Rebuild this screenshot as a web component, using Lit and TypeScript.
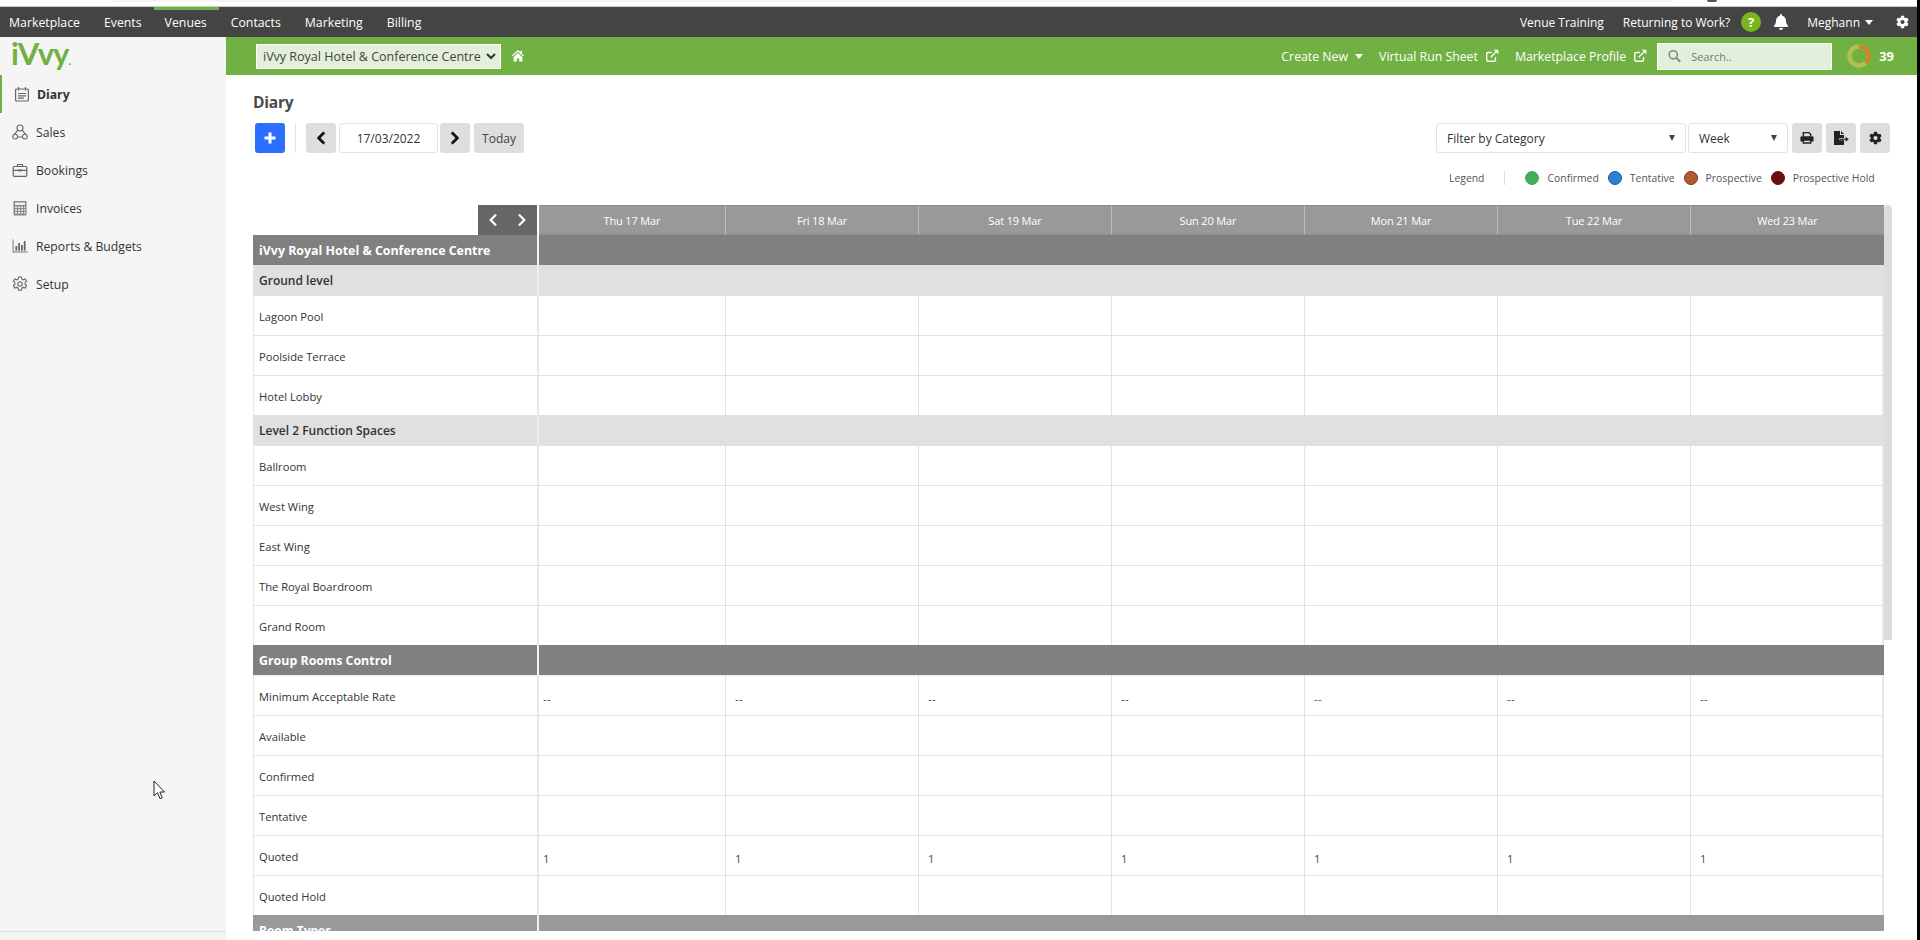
import { LitElement, html, css, svg } from "lit";
import { customElement } from "lit/decorators.js";

const ico = (vb: string, path: unknown, cls = "") => html`<svg class="ico ${cls}" viewBox=${vb} fill="currentColor">${path}</svg>`;

const chevL = svg`<path d="M34.52 239.03L228.87 44.69c9.37-9.37 24.57-9.37 33.94 0l22.67 22.67c9.36 9.36 9.37 24.52.04 33.9L131.49 256l154.02 154.75c9.34 9.38 9.32 24.54-.04 33.9l-22.67 22.67c-9.37 9.37-24.57 9.37-33.94 0L34.52 272.97c-9.37-9.37-9.37-24.57 0-33.94z"/>`;
const chevR = svg`<path d="M285.476 272.971L91.132 467.314c-9.373 9.373-24.569 9.373-33.941 0l-22.667-22.667c-9.357-9.357-9.375-24.522-.04-33.901L188.505 256 34.484 101.255c-9.335-9.379-9.317-24.544.04-33.901l22.667-22.667c9.373-9.373 24.569-9.373 33.941 0L285.475 239.03c9.373 9.372 9.373 24.568.001 33.941z"/>`;
const bell = svg`<path d="M224 512c35.32 0 63.97-28.65 63.97-64H160.03c0 35.35 28.65 64 63.97 64zm215.39-149.71c-19.32-20.76-55.47-51.99-55.47-154.29 0-77.7-54.48-139.9-127.94-155.16V32c0-17.67-14.32-32-31.98-32s-31.98 14.33-31.98 32v20.84C118.56 68.1 64.08 130.3 64.08 208c0 102.3-36.15 133.53-55.47 154.29-6 6.45-8.66 14.16-8.61 21.71.11 16.4 12.98 32 32.1 32h383.8c19.12 0 32-15.6 32.1-32 .05-7.55-2.61-15.27-8.61-21.71z"/>`;
const cog = svg`<path d="M487.4 315.7l-42.6-24.6c4.3-23.2 4.3-47 0-70.2l42.6-24.6c4.9-2.8 7.1-8.6 5.5-14-11.1-35.6-30-67.8-54.7-94.6-3.8-4.1-10-5.1-14.8-2.3L380.8 110c-17.9-15.4-38.5-27.3-60.8-35.1V25.8c0-5.6-3.9-10.5-9.4-11.7-36.7-8.2-74.3-7.8-109.2 0-5.5 1.2-9.4 6.1-9.4 11.7V75c-22.2 7.9-42.8 19.8-60.8 35.1L88.7 85.5c-4.9-2.8-11-1.9-14.8 2.3-24.7 26.7-43.6 58.9-54.7 94.6-1.7 5.4.6 11.2 5.5 14L67.3 221c-4.3 23.2-4.3 47 0 70.2l-42.6 24.6c-4.9 2.8-7.1 8.6-5.5 14 11.1 35.6 30 67.8 54.7 94.6 3.8 4.1 10 5.1 14.8 2.3l42.6-24.6c17.9 15.4 38.5 27.3 60.8 35.1v49.2c0 5.6 3.9 10.5 9.4 11.7 36.7 8.2 74.3 7.8 109.2 0 5.5-1.2 9.4-6.1 9.4-11.7v-49.2c22.2-7.9 42.8-19.8 60.8-35.1l42.6 24.6c4.9 2.8 11 1.9 14.8-2.3 24.7-26.7 43.6-58.9 54.7-94.6 1.5-5.5-.7-11.3-5.6-14.1zM256 336c-44.1 0-80-35.9-80-80s35.9-80 80-80 80 35.9 80 80-35.9 80-80 80z"/>`;
const home = svg`<path d="M8 1.2L1 7.4l.9 1L8 3.1l6.100 5.300.9-1-2.400-2.100V2h-1.700v1.800z"/><path d="M3 9v5.400h3.600v-3.600h2.800v3.600H13V9L8 4.600z"/>`;
const ext = svg`<g fill="none" stroke="currentColor" stroke-width="1.500"><path d="M12 9v3.500a1.500 1.500 0 0 1-1.500 1.500h-7A1.500 1.500 0 0 1 2 12.500v-7A1.500 1.500 0 0 1 3.500 4H8"/><path d="M6.500 9.500L14 2"/></g><path d="M10 .8h5.200V6z"/>`;
const printer = svg`<path d="M3 1h7.500L13 3.500V6h-1.600V4.200L9.800 2.600H4.600V6H3z"/><path fill-rule="evenodd" d="M2 6h12a1.500 1.500 0 0 1 1.500 1.500V12H13v2.500H3V12H.5V7.500A1.500 1.500 0 0 1 2 6zm2.600 5v1.900h6.800V11z"/>`;
const fileExp = svg`<path d="M1 1h6v4h4v3H6.500v2H11v4.500a.5.5 0 0 1-.5.500h-9a.5.5 0 0 1-.5-.5z"/><path d="M8 1l3 3H8z"/><path d="M6.500 8.500h6V6.500L16 9.300l-3.500 2.800v-2h-6z" stroke="#dedede" stroke-width=".4"/>`;
const search = svg`<g fill="none" stroke="currentColor" stroke-width="2"><circle cx="6.500" cy="6.500" r="5"/><path d="M10.200 10.200l4.800 4.800" stroke-width="2.400"/></g>`;

const sideIcons: Record<string, unknown> = {
  Diary: svg`<g fill="none" stroke="currentColor" stroke-width="1.200"><rect x="1.600" y="3" width="12.800" height="12" rx=".8"/><path d="M4.500 1v3.500M11.500 1v3.500M4 7.500h8M4 9.800h8M4 12.100h6"/></g>`,
  Sales: svg`<g fill="none" stroke="currentColor" stroke-width="1.100"><circle cx="8" cy="4" r="3"/><circle cx="3.200" cy="12.600" r="2.400"/><circle cx="12.800" cy="12.600" r="2.400"/><path d="M5.800 6.200L2.500 10.300M10.200 6.200l3.300 4.100M5.700 13h4.600"/></g>`,
  Bookings: svg`<g fill="none" stroke="currentColor" stroke-width="1.200"><rect x="1.200" y="4.500" width="13.600" height="9.800" rx="1"/><path d="M5.500 4.500V2.500h5v2M1.200 8.300h13.600"/></g><rect x="6.300" y="7.400" width="3.400" height="2" />`,
  Invoices: svg`<rect x="1.500" y="1" width="13" height="14.500" fill="#888" rx=".5"/><rect x="3" y="2.500" width="10" height="2.500" fill="#eee"/><g fill="#eee"><rect x="3" y="6.500" width="2" height="1.600"/><rect x="6" y="6.500" width="2" height="1.600"/><rect x="9" y="6.500" width="2" height="1.600"/><rect x="12" y="6.500" width="1.200" height="1.600"/><rect x="3" y="9.300" width="2" height="1.600"/><rect x="6" y="9.300" width="2" height="1.600"/><rect x="9" y="9.300" width="2" height="1.600"/><rect x="12" y="9.300" width="1.200" height="1.600"/><rect x="3" y="12" width="2" height="1.600"/><rect x="6" y="12" width="2" height="1.600"/><rect x="9" y="12" width="2" height="1.600"/><rect x="12" y="12" width="1.200" height="1.600"/></g>`,
  "Reports & Budgets": svg`<path d="M.6 1.500h1v12h14.800v1H.6z" fill="#777"/><rect x="3.400" y="8" width="1.800" height="4.700"/><rect x="6.200" y="5" width="1.800" height="7.700"/><rect x="9" y="7" width="1.800" height="5.700"/><rect x="11.800" y="3" width="1.800" height="9.700"/>`,
  Setup: svg`<g fill="none" stroke="currentColor" stroke-width="1.100"><path d="M6.600 1h2.800l.4 2 1.500.8 1.900-.8 1.400 2.400-1.500 1.300v1.700l1.500 1.300-1.400 2.400-1.900-.7-1.500.8-.4 2.100H6.600l-.4-2.100-1.500-.8-1.900.7-1.400-2.400 1.500-1.300V6.700L1.400 5.400l1.400-2.400 1.900.8 1.500-.8z"/><circle cx="8" cy="8" r="2.200"/></g>`,
};

const DAYS = ["Thu 17 Mar", "Fri 18 Mar", "Sat 19 Mar", "Sun 20 Mar", "Mon 21 Mar", "Tue 22 Mar", "Wed 23 Mar"];

type Row = { kind: "venue" | "group" | "room" | "types"; label: string; val?: string; last?: boolean; tall?: boolean };
const ROWS: Row[] = [
  { kind: "venue", label: "iVvy Royal Hotel & Conference Centre" },
  { kind: "group", label: "Ground level" },
  { kind: "room", label: "Lagoon Pool" },
  { kind: "room", label: "Poolside Terrace" },
  { kind: "room", label: "Hotel Lobby", last: true },
  { kind: "group", label: "Level 2 Function Spaces" },
  { kind: "room", label: "Ballroom" },
  { kind: "room", label: "West Wing" },
  { kind: "room", label: "East Wing" },
  { kind: "room", label: "The Royal Boardroom" },
  { kind: "room", label: "Grand Room", last: true },
  { kind: "venue", label: "Group Rooms Control", tall: true },
  { kind: "room", label: "Minimum Acceptable Rate", val: "--" },
  { kind: "room", label: "Available" },
  { kind: "room", label: "Confirmed" },
  { kind: "room", label: "Tentative" },
  { kind: "room", label: "Quoted", val: "1" },
  { kind: "room", label: "Quoted Hold", last: true },
  { kind: "types", label: "Room Types" },
];

@customElement("app-root")
export class AppRoot extends LitElement {
  static styles = css`
    :host { display: block; width: 1920px; height: 940px; overflow: hidden; background: #fff;
      font-family: "Open Sans", sans-serif; font-size: 12px; color: #333; position: relative; }
    * { box-sizing: border-box; }
    .ico { display: block; flex: none; }
    .page { display: flex; height: 940px; }
    .edge { width: 3px; background: #000; flex: none; }
    .shell { flex: 1; min-width: 0; display: flex; flex-direction: column; }

    .chrome { height: 7px; border-bottom: 1px solid #c8c8c8; display: flex; flex: none; }
    .chrome .band { margin-left: 113px; width: 1559px; height: 2px; background: #f4f4f4; }
    .chrome .blob { margin-left: 35px; width: 10px; height: 2px; background: #555; border-radius: 0 0 4px 4px; }

    .topnav { height: 30px; background: #444; display: flex; align-items: center; color: #fff; flex: none; font-size: 12.300px; }
    .topnav a { height: 30px; display: flex; align-items: center; padding: 0 12px; position: relative; }
    .topnav a.first { padding-left: 9px; }
    .topnav a.on { border-top: 3px solid #71b043; padding-bottom: 3px; padding-left: 11px; padding-right: 12px; }
    .topright { margin-left: auto; display: flex; align-items: center; height: 30px; font-size: 12px; }
    .topright .t1 { margin-right: 19px; }
    .topright .t2 { margin-right: 11px; }
    .help { width: 20px; height: 20px; border-radius: 50%; background: #7ab51d; font-weight: 700; font-size: 13px;
      display: flex; align-items: center; justify-content: center; margin-right: 13px; }
    .bell { width: 14px; height: 16px; margin-right: 19px; }
    .caret { width: 0; height: 0; border: 4px solid transparent; border-top: 5px solid #fff; border-bottom: 0; margin-left: 7px; flex: none; }
    .topright .caret { margin-left: 5px; }
    .gear { width: 13px; height: 14px; margin-left: 23px; margin-right: 8px; }

    .body { flex: 1; display: flex; min-height: 0; }
    .side { width: 226px; background: #f5f5f5; flex: none; display: flex; flex-direction: column; }
    .logo { height: 38px; padding-left: 11px; color: #71b043; font-size: 31px; line-height: 32px; font-weight: 700;
      font-family: "Lato", sans-serif; letter-spacing: -1px; }
    .logo span { font-size: 11px; letter-spacing: 0; }
    .item { height: 38px; display: flex; align-items: center; padding-left: 12px; color: #333; font-size: 12.200px; }
    .item svg { width: 16px; height: 16px; color: #666; margin-right: 8px; }
    .item.on { border-left: 2px solid #71b043; padding-left: 12px; font-weight: 700; }
    .item.on svg { margin-right: 7px; }
    .sidefoot { margin-top: auto; height: 9px; border-top: 1px solid #e0e0e0; }

    .main { flex: 1; min-width: 0; display: flex; flex-direction: column; }
    .greenbar { height: 38px; background: #71b043; display: flex; align-items: center; color: #fff; flex: none; padding-left: 30px; }
    .venuesel { width: 245px; height: 25px; background: #e3efd9; border: 1px solid #fff; display: flex; align-items: center;
      padding: 0 4px 0 6px; color: #444; justify-content: space-between; white-space: nowrap; font-size: 12.500px; }
    .homeic { width: 14px; height: 14px; margin-left: 10px; }
    .greenright { margin-left: auto; display: flex; align-items: center; height: 38px; font-size: 12.300px; }
    .greenright .gap1 { margin-left: 16px; }
    .extic { width: 14px; height: 14px; margin-left: 7px; }
    .searchbox { width: 175px; height: 27px; background: #e2efda; border: 1px solid #fff; margin-left: 10px; display: flex; align-items: center;
      padding-left: 10px; color: #777; font-size: 11px; gap: 10px; }
    .searchbox svg { width: 13px; height: 14px; color: #888; }
    .donut { width: 24px; height: 24px; margin-left: 15px; }
    .count { font-weight: 700; margin-left: 8px; margin-right: 23px; font-size: 13px; }

    .work { flex: 1; min-height: 0; padding: 0 0 0 27px; display: flex; flex-direction: column; }
    h1 { margin: 17px 0 0 0; font-size: 15.500px; line-height: 21px; color: #4a4a4a; font-weight: 700; height: 21px; letter-spacing: -.2px; }
    .tools { display: flex; align-items: center; height: 30px; margin-top: 10px; margin-left: 2px; margin-right: 27px; }
    .btn { width: 30px; height: 30px; border-radius: 3px; background: #dedede; display: flex; align-items: center; justify-content: center; color: #111; flex: none; }
    .btn svg { width: 16px; height: 16px; }
    .btn svg.chev { width: 10px; height: 14px; stroke: currentColor; stroke-width: 30px; }
    .btn svg.prt { width: 14px; height: 14px; }
    .btn svg.cg { width: 13px; height: 14px; }
    .btn.add { background: #2a6fff; color: #fff; }
    .vsep { width: 1px; height: 30px; background: #e4e4e4; margin: 0 10px; }
    .date { width: 99px; height: 30px; border: 1px solid #e2e2e2; border-radius: 3px; margin: 0 2px 0 3px; display: flex; align-items: center; justify-content: center; color: #333; }
    .today { width: 50px; margin-left: 4px; color: #444; }
    .spacer { flex: 1; }
    .sel { height: 30px; border: 1px solid #e2e2e2; border-radius: 3px; display: flex; align-items: center; justify-content: space-between; padding: 0 10px; color: #333; }
    .sel.cat { width: 250px; }
    .sel.wk { width: 100px; margin-left: 2px; margin-right: 4px; }
    .tri { width: 0; height: 0; border: 3.500px solid transparent; border-top: 6px solid #444; border-bottom: 0; }
    .tools .btn.r { margin-left: 4px; color: #222; }
    .tools .btn.r1 { margin-left: 0; color: #222; }

    .legend { display: flex; align-items: center; height: 14px; margin-top: 18px; font-size: 10.400px; color: #555; padding-left: 1196px; white-space: nowrap; }
    .lsep { width: 1px; height: 14px; background: #ddd; margin: 0 20px; }
    .dot { width: 14px; height: 14px; border-radius: 50%; margin-right: 8px; border: 1px solid; flex: none; }
    .legend .lab { margin-right: 9px; }

    .tablewrap { margin-top: 20px; display: flex; height: 726px; overflow: hidden; flex: none; }
    .table { width: 1631px; flex: none; }
    .scroll { width: 8px; height: 435px; background: #dcdce0; border-radius: 4px 4px 0 0; }
    .row { display: grid; grid-template-columns: 286px 187px repeat(6, 193px); width: 1631px; }
    .cell { min-width: 0; }
    .lbl { padding-left: 5px; display: flex; align-items: center; border-right: 2px solid #e8e8e8; border-left: 1px solid #e8e8e8; }
    .head { height: 30px; font-size: 11px; color: #fff; }
    .head .lbl { border: 0; justify-content: flex-end; padding: 0; background: #fff; padding-right: 2px; }
    .pager { width: 59px; height: 30px; background: #666; display: flex; align-items: center; justify-content: space-around; color: #fff; }
    .pager svg { width: 10px; height: 14px; }
    .day { background: #999; border-top: 1px solid #888; border-bottom: 1px solid #8c8c8c; border-right: 1px solid #bcbcbc;
      display: flex; align-items: center; justify-content: center; letter-spacing: -.15px; }
    .day:last-child { border-right: 0; }

    .venue { height: 30px; background: #808080; color: #fff; font-weight: 700; font-size: 12.400px; }
    .venue.tall { height: 31px; border-bottom: 1px solid #eee; }
    .venue .lbl { border-left: 0; padding-left: 6px; border-right: 2px solid #f2f2f2; }
    .venue .rest, .group .rest, .types .rest { grid-column: 2 / -1; }
    .group { height: 31px; background: #e0e0e0; color: #333; font-weight: 600; }
    .group .lbl { border-left: 0; padding-left: 6px; border-right: 2px solid #ececec; }
    .room { height: 40px; font-size: 11.200px; color: #333; border-bottom: 1px solid #e2e2e2; }
    .room.last { height: 39px; border-bottom: 0; }
    .room .lbl { padding-top: 1px; }
    .room .v { border-right: 1px solid #e2e2e2; display: flex; align-items: center; padding: 6px 0 0 4px; color: #3c4a5c; letter-spacing: .5px; }
    .room .v ~ .v { padding-left: 9px; }
    .room .v:last-child { border-right: 2px solid #e8e8e8; }
    .types { height: 30px; background: #999; color: #fff; font-weight: 700; }
    .types .lbl { border-left: 0; border-right: 2px solid #eee; padding-left: 6px; align-items: flex-start; padding-top: 7px; }
    .clip { height: 16px; overflow: hidden; }

    .cursor { position: absolute; left: 153px; top: 780px; width: 13px; height: 20px; }
  `;

  private day(d: string) { return html`<div class="cell day">${d}</div>`; }

  private row(r: Row) {
    if (r.kind === "room") {
      return html`<div class="row room ${r.last ? "last" : ""}">
        <div class="cell lbl">${r.label}</div>
        ${DAYS.map(() => html`<div class="cell v">${r.val ?? ""}</div>`)}
      </div>`;
    }
    const el = html`<div class="row ${r.kind} ${r.tall ? "tall" : ""}"><div class="cell lbl">${r.label}</div><div class="rest"></div></div>`;
    return r.kind === "types" ? html`<div class="clip">${el}</div>` : el;
  }

  render() {
    const nav = ["Marketplace", "Events", "Venues", "Contacts", "Marketing", "Billing"];
    const side = ["Diary", "Sales", "Bookings", "Invoices", "Reports & Budgets", "Setup"];
    return html`
      <div class="page">
        <div class="shell">
          <div class="chrome"><div class="band"></div><div class="blob"></div></div>
          <div class="topnav">
            ${nav.map((n, i) => html`<a class="${i === 0 ? "first" : ""} ${n === "Venues" ? "on" : ""}">${n}</a>`)}
            <div class="topright">
              <span class="t1">Venue Training</span>
              <span class="t2">Returning to Work?</span>
              <span class="help">?</span>
              ${ico("0 0 448 512", bell, "bell")}
              <span>Meghann</span><span class="caret"></span>
              ${ico("0 0 512 512", cog, "gear")}
            </div>
          </div>
          <div class="body">
            <div class="side">
              <div class="logo">iVvy<span>.</span></div>
              ${side.map((s) => html`<div class="item ${s === "Diary" ? "on" : ""}">${ico("0 0 16 16", sideIcons[s])}${s}</div>`)}
              <div class="sidefoot"></div>
            </div>
            <div class="main">
              <div class="greenbar">
                <div class="venuesel"><span>iVvy Royal Hotel &amp; Conference Centre</span>
                  <svg width="10" height="7" viewBox="0 0 10 7" fill="none" stroke="#333" stroke-width="2"><path d="M1 1l4 4 4-4"/></svg></div>
                ${ico("0 0 16 16", home, "homeic")}
                <div class="greenright">
                  <span>Create New</span><span class="caret"></span>
                  <span class="gap1">Virtual Run Sheet</span>${ico("0 0 16 16", ext, "extic")}
                  <span class="gap1">Marketplace Profile</span>${ico("0 0 16 16", ext, "extic")}
                  <div class="searchbox">${ico("0 0 16 16", search)}<span>Search..</span></div>
                  <svg class="donut" viewBox="0 0 24 24" fill="none" stroke-width="4.500">
                    <circle cx="12" cy="12" r="9.500" stroke="#b1c24a"/>
                    <path d="M12 2.500A9.500 9.500 0 0 1 18.500 19" stroke="#c9872c"/>
                  </svg>
                  <span class="count">39</span>
                </div>
              </div>
              <div class="work">
                <h1>Diary</h1>
                <div class="tools">
                  <div class="btn add"><svg viewBox="0 0 16 16" fill="currentColor"><rect x="6.500" y="2.500" width="3" height="11"/><rect x="2.500" y="6.500" width="11" height="3"/></svg></div>
                  <div class="vsep"></div>
                  <div class="btn">${ico("0 0 320 512", chevL, "chev")}</div>
                  <div class="date">17/03/2022</div>
                  <div class="btn">${ico("0 0 320 512", chevR, "chev")}</div>
                  <div class="btn today">Today</div>
                  <div class="spacer"></div>
                  <div class="sel cat"><span>Filter by Category</span><span class="tri"></span></div>
                  <div class="sel wk"><span>Week</span><span class="tri"></span></div>
                  <div class="btn r1">${ico("0 0 16 16", printer, "prt")}</div>
                  <div class="btn r">${ico("0 0 16 16", fileExp)}</div>
                  <div class="btn r">${ico("0 0 512 512", cog, "cg")}</div>
                </div>
                <div class="legend">
                  <span>Legend</span><span class="lsep"></span>
                  <span class="dot" style="background:#3fae5a;border-color:#3fae5a"></span><span class="lab">Confirmed</span>
                  <span class="dot" style="background:#2a80d2;border-color:#2358a8"></span><span class="lab">Tentative</span>
                  <span class="dot" style="background:#b05a30;border-color:#7d3420"></span><span class="lab">Prospective</span>
                  <span class="dot" style="background:#6e0d0d;border-color:#6e0d0d"></span><span class="lab">Prospective Hold</span>
                </div>
                <div class="tablewrap">
                  <div class="table">
                    <div class="row head">
                      <div class="cell lbl"><div class="pager">${ico("0 0 320 512", chevL)}${ico("0 0 320 512", chevR)}</div></div>
                      ${DAYS.map((d) => this.day(d))}
                    </div>
                    ${ROWS.map((r) => this.row(r))}
                  </div>
                  <div class="scroll"></div>
                </div>
              </div>
            </div>
          </div>
        </div>
        <div class="edge"></div>
      </div>
      <svg class="cursor" viewBox="0 0 13 20"><path d="M1 1v15l3.500-3.300 2.500 6 2.300-1-2.500-5.700H11.500z" fill="#fff" stroke="#222" stroke-width="1"/></svg>
    `;
  }
}
